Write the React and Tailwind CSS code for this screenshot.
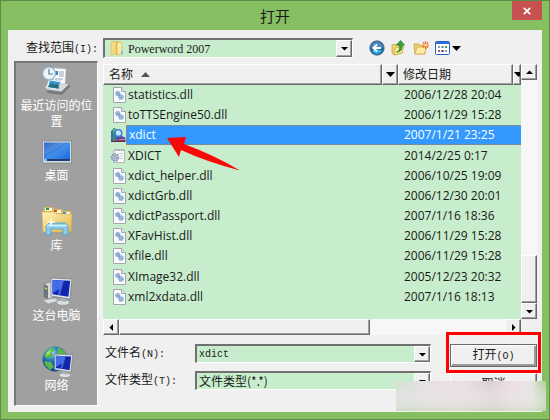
import React from 'react';

const files = [
  { name: 'statistics.dll', date: '2006/12/28 20:04', type: 'dll' },
  { name: 'toTTSEngine50.dll', date: '2006/11/29 15:28', type: 'dll' },
  { name: 'xdict', date: '2007/1/21 23:25', type: 'app', selected: true },
  { name: 'XDICT', date: '2014/2/25 0:17', type: 'ini' },
  { name: 'xdict_helper.dll', date: '2006/10/25 19:09', type: 'dll' },
  { name: 'xdictGrb.dll', date: '2006/12/30 20:01', type: 'dll' },
  { name: 'xdictPassport.dll', date: '2007/1/16 18:36', type: 'dll' },
  { name: 'XFavHist.dll', date: '2006/11/29 15:28', type: 'dll' },
  { name: 'xfile.dll', date: '2006/11/29 15:28', type: 'dll' },
  { name: 'XImage32.dll', date: '2005/12/23 20:32', type: 'dll' },
  { name: 'xml2xdata.dll', date: '2007/1/16 18:13', type: 'dll' },
];

const raised =
  'border border-t-white border-l-white border-r-[#696969] border-b-[#696969] bg-[#f0f0f0] shadow-[inset_-1px_-1px_0_#a0a0a0]';
const sunken =
  'border-t-2 border-l-2 border-r border-b border-t-[#707070] border-l-[#707070] border-r-white border-b-white bg-[#c7edcc]';
const mono = "font-['Liberation_Mono','Noto_Sans_CJK_SC',monospace] text-[10px]";
const serif = "font-['Liberation_Serif','Noto_Sans_CJK_SC',serif] text-[12px] leading-4";

function Arrow({ dir = 'down' }) {
  const d = {
    down: 'M1 3h7L4.5 6.500z',
    up: 'M1 6h7L4.500 2.500z',
    left: 'M6 1v7L2.500 4.500z',
    right: 'M3 1v7L6.500 4.500z',
  }[dir];
  return (
    <svg className="block size-[9px] shrink-0" viewBox="0 0 9 9">
      <path d={d} fill="#000" />
    </svg>
  );
}

function ScrollButton({ dir, label }) {
  return (
    <button type="button" aria-label={label} className={`flex size-4 shrink-0 items-center justify-center ${raised}`}>
      <Arrow dir={dir} />
    </button>
  );
}

function DropMark() {
  return (
    <span className={`pointer-events-none absolute inset-y-0 right-0 flex w-4 items-center justify-center ${raised}`}>
      <Arrow />
    </span>
  );
}

function Gear({ cx, cy, r }) {
  return (
    <g transform={`translate(${cx} ${cy})`}>
      <circle r={r} fill="#dcebf8" stroke="#6f98c4" strokeWidth="1.2" strokeDasharray="1.3 .5" />
      <circle r={r - 0.8} fill="none" stroke="#6f9bcb" strokeWidth=".7" />
      <circle r=".6" fill="#38669b" />
    </g>
  );
}

function FileIcon({ type }) {
  if (type === 'app') {
    return (
      <svg className="-ml-[2px] mr-[2px] block h-4 w-4 shrink-0" viewBox="0 0 16 16">
        <path d="M1 4l3-3 3 1-1 3v8.500H1z" fill="#3f9272" />
        <path d="M1 4l2 .6v9H1z" fill="#3b6f9c" />
        <path d="M3 4.600L6 1.800" stroke="#a6dcc0" strokeWidth=".8" />
        <path d="M5 5h3v8.500H5z" fill="#3f63b5" />
        <path d="M8 10h7l.5 4H8z" fill="#8c2f60" />
        <path d="M1 13.500h14.500V15H1z" fill="#6b2350" />
        <path d="M9 12.700h6" stroke="#e9cbd8" strokeWidth=".7" />
        <path d="M10.500 8.500l4 3.500" stroke="#2f6fd6" strokeWidth="2.200" />
        <circle cx="8.500" cy="6" r="3.300" fill="#bfe6ff" stroke="#3f7fe0" strokeWidth="1.500" />
        <path d="M6.700 5.500a2 2 0 0 1 2-1.500" stroke="#fff" fill="none" />
      </svg>
    );
  }
  if (type === 'ini') {
    return (
      <svg className="-ml-[2px] mr-[2px] block h-4 w-4 shrink-0" viewBox="0 0 16 16">
        <path d="M4 2h10.500v12.500H4z" fill="#fbfbfb" stroke="#b4b4b4" />
        <path d="M5.500 1v2M7.500 1v2M9.500 1v2M11.500 1v2M13.500 1v2" stroke="#999" strokeWidth=".8" />
        <path d="M8.500 5.500H13M10 8h3M10 10.500h3" stroke="#ccc" />
        <circle cx="5" cy="9.500" r="3.400" fill="#c9d7e2" stroke="#8499ab" strokeWidth="1.800" strokeDasharray="1.800 .7" />
        <circle cx="5" cy="9.500" r="1.400" fill="#f4f8fa" stroke="#6c8498" />
      </svg>
    );
  }
  return (
    <svg className="block h-4 w-4 shrink-0" viewBox="0 0 16 16">
      <path d="M1.500.5h8l4 4v11h-12z" fill="#fbfbfd" stroke="#a3a7ab" />
      <path d="M9.500.5v4h4" fill="#e3e6e8" stroke="#a3a7ab" />
      <Gear cx={5.8} cy={6.5} r={2} />
      <Gear cx={9} cy={10} r={2.2} />
    </svg>
  );
}

function RecentIcon() {
  return (
    <svg className="block h-8 w-8" viewBox="0 0 32 32">
      <path d="M3 22l8-5 18 2-7 8-16-2z" fill="#d9dcdd" stroke="#888" strokeWidth=".6" />
      <path d="M6 25l14 2 8-8 1 3-8 8-15-2z" fill="#777b7e" />
      <path d="M13 3l12 1-1 15-12-1z" fill="#fafcff" stroke="#b4bbc0" strokeWidth=".5" />
      <path d="M18 7h5M18 9h5M18 11h5M14 14h8" stroke="#9ba7b1" />
      <path d="M14 6h3v4h-3z" fill="#3485ce" />
      <path d="M8 14l12 2-2 9-13-2z" fill="#eef8ff" stroke="#b1bdc6" strokeWidth=".5" />
      <path d="M9 15.500l10 1.700-1.500 6.500L7 22z" fill="#3992d2" />
      <path d="M7 22l4-4 2 2 3-1 2 4.500z" fill="#256f79" />
      <circle cx="8" cy="8.500" r="6.500" fill="#dce8ef" stroke="#8faab9" />
      <circle cx="8" cy="8.500" r="4.900" fill="#edf6fb" />
      <path d="M8 4v5h4" stroke="#557d96" strokeWidth="1.200" fill="none" />
    </svg>
  );
}

function DesktopIcon() {
  return (
    <svg className="block h-8 w-8" viewBox="0 0 32 32">
      <defs>
        <linearGradient id="desk" x2="1" y2="1">
          <stop stopColor="#1d55c1" />
          <stop offset=".5" stopColor="#438eea" />
          <stop offset="1" stopColor="#1764da" />
        </linearGradient>
      </defs>
      <path d="M1.500 6h29v22h-29z" fill="#d4dbe2" stroke="#77818a" strokeWidth=".7" />
      <path d="M3 7.500h26V26H3z" fill="url(#desk)" />
      <path d="M3 7.500h22L3 20z" fill="#fff" opacity=".12" />
      <path d="M3 24h26v2H3z" fill="#213e70" />
      <path d="M3 24h3v2H3z" fill="#73c2f0" />
    </svg>
  );
}

function LibraryIcon() {
  return (
    <svg className="block h-8 w-8" viewBox="0 0 32 32">
      <defs>
        <linearGradient id="lib" x2="1" y2="1">
          <stop stopColor="#fff3b4" />
          <stop offset="1" stopColor="#dfb64d" />
        </linearGradient>
      </defs>
      <path d="M2 5l2-3h8l1 2h8l1 2h8v18l-2 3H2z" fill="#ddb951" />
      <path d="M4 3h7v3H4zM13 5h7v3h-7zM22 7h7v2h-7z" fill="#fff8df" />
      <path d="M5 3h3v2H5z" fill="#209b45" />
      <path d="M13 5h3v2h-3z" fill="#d24237" />
      <path d="M22 7h3v2h-3z" fill="#358ad8" />
      <path d="M1 7h12l2 2h16l-1 18H2z" fill="url(#lib)" stroke="#d3aa4e" strokeWidth=".5" />
      <path d="M5 21l3-3h16l3 3v9h-5v-6H10v6H5z" fill="#8accea" stroke="#4b9bc2" strokeWidth=".8" />
      <path d="M6 20.500h20" stroke="#d9f7ff" strokeWidth="1.300" />
      <path d="M10 12l1 4 4 1-4 1-1 4-1-4-4-1 4-1z" fill="#fffce5" />
    </svg>
  );
}

function Monitor() {
  return (
    <>
      <ellipse cx="22" cy="27.500" rx="6.500" ry="2.800" fill="#dce0e3" stroke="#858d94" strokeWidth=".6" />
      <path d="M19 20l6 1v6l-6-1z" fill="#a9b3bc" />
      <path d="M10 3l21 1-2 20-19-3z" fill="#e2e7ec" stroke="#6c7681" strokeWidth=".7" />
      <path d="M11.500 5l17.700 .8-1.800 16-15.900-2.500z" fill="#1026ac" />
      <path d="M11.500 5l9 .4-1.500 8-7.500 4.800z" fill="#416be9" />
      <path d="M20 5.400l3 .1-4 14.500-2-.4z" fill="#7aa5ff" opacity=".5" />
    </>
  );
}

function ComputerIcon() {
  return (
    <svg className="block h-8 w-8" viewBox="0 0 32 32">
      <path d="M3 9l6-2 4 2v13l-6 2-4-2z" fill="#d4d8da" stroke="#747c83" strokeWidth=".6" />
      <path d="M3 9l4 2v13l-4-2z" fill="#6d747a" />
      <path d="M4 13l2 1" stroke="#a4f34d" strokeWidth="1.500" />
      <path d="M2 25l12-2 4 3-11 3z" fill="#d9dcde" stroke="#8b9298" strokeWidth=".6" />
      <Monitor />
    </svg>
  );
}

function NetworkIcon() {
  return (
    <svg className="block h-8 w-8" viewBox="0 0 32 32">
      <defs>
        <radialGradient id="globe" cx=".35" cy=".25">
          <stop stopColor="#caf2ff" />
          <stop offset=".45" stopColor="#378bd4" />
          <stop offset="1" stopColor="#104a94" />
        </radialGradient>
      </defs>
      <circle cx="14" cy="14" r="12.500" fill="url(#globe)" />
      <path d="M5 6l7-4 2 3-3 2 1 4-5 3-4-3zM17 2l7 4 2 6-6 2-4-4zM3 16l7 1 3 5-4 3-5-5z" fill="#56b64e" />
      <path d="M6 7l5-3-2 5-4 2z" fill="#9ddd6d" />
      <g transform="translate(5 6.500) scale(.86)">
        <Monitor />
      </g>
    </svg>
  );
}

const places = [
  { label: '最近访问的位置', Icon: RecentIcon },
  { label: '桌面', Icon: DesktopIcon },
  { label: '库', Icon: LibraryIcon },
  { label: '这台电脑', Icon: ComputerIcon },
  { label: '网络', Icon: NetworkIcon },
];

function Toolbar() {
  return (
    <div className="flex w-[189px] shrink-0 items-center pl-4">
      <button type="button" aria-label="后退" className="w-[21px]">
        <svg className="block size-4" viewBox="0 0 16 16">
          <circle cx="8" cy="8" r="7.300" fill="#1e659d" stroke="#687b8d" strokeWidth=".7" />
          <path d="M2 8a6 6 0 0 1 12 0c-4-2-8 2-12 0z" fill="#528dbe" />
          <path d="M3 11c3-2 7-2 10 0a6 6 0 0 1-10 0z" fill="#2bb9e4" />
          <path d="M12 8H5M8 4.500L4.500 8 8 11.500" fill="none" stroke="#fff" strokeWidth="2" />
        </svg>
      </button>
      <button type="button" aria-label="向上一级" className="w-[23px]">
        <svg className="block size-4" viewBox="0 0 16 16">
          <path d="M2 5l4-1 1 2 5-1v8l-8 2-2-2z" fill="#f1d66a" stroke="#ba9937" strokeWidth=".7" />
          <path d="M5 8l9-2-2 7-8 2z" fill="#ffec9b" stroke="#c5a13e" strokeWidth=".7" />
          <path d="M6.500 12c3-1 3.500-3 3-7H6.500l4-4.500 4 4.500H12c.5 5-1.500 7-5.500 7z" fill="#35a735" stroke="#217628" strokeWidth=".7" />
        </svg>
      </button>
      <button type="button" aria-label="新建文件夹" className="w-[22px]">
        <svg className="block size-4" viewBox="0 0 16 16">
          <path d="M1 4h5l1 2h5v8H2z" fill="#edcf61" stroke="#be9a40" strokeWidth=".7" />
          <path d="M4 7h10l-3 7H2z" fill="#ffeaa0" stroke="#cba747" strokeWidth=".7" />
          <path d="M12.500 1v8M8.500 5h8M9.800 2.200l5.500 5.500M15.200 2.200L9.800 7.700" stroke="#ee662d" strokeWidth="1.100" />
          <circle cx="12.500" cy="5" r="1.500" fill="#ffe574" />
        </svg>
      </button>
      <button type="button" aria-label="查看方式" className="flex items-center gap-[2px]">
        <svg className="block h-[14px] w-[15px]" viewBox="0 0 15 14">
          <rect x=".5" y=".5" width="14" height="13" rx="1" fill="#fff" stroke="#235fc5" />
          <path d="M1 1h13v2H1z" fill="#2e70dc" />
          <path d="M3 5h2v2H3zM10 9h2v2h-2z" fill="#8b9bac" />
          <path d="M6.500 5h2v2h-2z" fill="#5c7ad3" />
          <path d="M10 5h2v2h-2z" fill="#499d55" />
          <path d="M3 9h2v2H3z" fill="#d4503a" />
          <path d="M6.500 9h2v2h-2z" fill="#302e95" />
        </svg>
        <HeadArrow />
      </button>
    </div>
  );
}

function HeadArrow() {
  return (
    <svg className="mx-auto block h-[5px] w-[9px]" viewBox="0 0 9 5">
      <path d="M0 0h9L4.500 5z" />
    </svg>
  );
}

function FileTable() {
  const th = `h-[21px] p-0 text-left font-normal ${raised}`;
  return (
    <div className="min-w-0 flex-1 overflow-hidden bg-[#c7edcc]">
      <table className="h-[243px] w-full table-fixed border-separate border-spacing-0 font-['Open_Sans','Noto_Sans_CJK_SC',sans-serif] text-[12px] leading-4 text-[#1a1a1a]">
        <colgroup>
          <col />
          <col className="w-4" />
          <col className="w-[115px]" />
          <col className="w-2" />
        </colgroup>
        <thead>
          <tr className="h-[21px]">
            <th scope="col" className={th}>
              <span className="flex items-center gap-2 pl-[5px]">
                名称
                <svg className="block h-[5px] w-[9px]" viewBox="0 0 9 5">
                  <path d="M0 5h9L4.500 0z" fill="#555" />
                </svg>
              </span>
            </th>
            <td className={th}><HeadArrow /></td>
            <th scope="col" className={th}>
              <span className="block pl-1">修改日期</span>
            </th>
            <td className={`overflow-hidden ${th}`}><HeadArrow /></td>
          </tr>
        </thead>
        <tbody>
          {files.map((f) => {
            const bg = f.selected
              ? 'border-y border-dotted border-[#c07a3c] bg-[#3399ff] text-white'
              : '';
            return (
              <tr key={f.name} aria-selected={!!f.selected}>
                <td colSpan={2} className="p-0">
                  <div className="flex h-5 items-center pl-[9px]">
                    <FileIcon type={f.type} />
                    <span
                      className={`-ml-[2px] flex h-5 flex-1 items-center pl-[2px] ${bg} ${f.selected ? 'border-l' : ''}`}
                    >
                      {f.name}
                    </span>
                  </div>
                </td>
                <td colSpan={2} className="p-0">
                  <div className={`flex h-5 items-center pl-[6px] whitespace-nowrap ${bg}`}>{f.date}</div>
                </td>
              </tr>
            );
          })}
        </tbody>
      </table>
    </div>
  );
}

export default function App() {
  return (
    <main className="relative flex min-h-screen flex-col border border-[#5f8a45] bg-[#86bf61] px-[7px] pb-[7px] font-['Noto_Sans_CJK_SC',sans-serif] text-[12px] leading-4 text-[#1a1a1a]">
      <header className="relative flex h-[29px] items-center justify-center">
        <h1 className="text-[15px] leading-5">打开</h1>
        <button
          type="button"
          aria-label="关闭"
          className="absolute top-0 right-0 flex h-[19px] w-[30px] items-center justify-center bg-[#c75050]"
        >
          <svg className="block size-2" viewBox="0 0 8 8">
            <path d="M.8.8l6.400 6.400M7.200.8L.8 7.200" stroke="#fff" strokeWidth="1.700" />
          </svg>
        </button>
      </header>

      <form className="flex flex-1 flex-col bg-[#f0f0f0]" onSubmit={(e) => e.preventDefault()}>
        <div className="flex h-[31px] items-center pt-[5px]">
          <label htmlFor="folder" className="w-[95px] shrink-0 pl-[18px]">
            查找范围<span className={mono}>(I):</span>
          </label>
          <div className={`relative h-5 flex-1 ${sunken}`}>
            <svg className="pointer-events-none absolute top-0 left-1 size-4" viewBox="0 0 16 16">
              <path d="M2 2l5-1v13l-5 1z" fill="#f5dc83" stroke="#d9b655" strokeWidth=".6" />
              <path d="M7 1l5 1v12l-5 1z" fill="#e5bb50" />
              <path d="M8 3l3-1 2 1v11l-5 1z" fill="#fbe9a3" stroke="#d6b150" strokeWidth=".6" />
              <path d="M12 11h2v3h-2z" fill="#8ab7c8" />
            </svg>
            <select id="folder" className={`block h-full w-full appearance-none bg-transparent pl-[23px] ${serif}`}>
              <option>Powerword 2007</option>
            </select>
            <DropMark />
          </div>
          <Toolbar />
        </div>

        <div className="flex flex-1 gap-[5px] px-[5px] pb-[6px] pl-[6px]">
          <nav className="w-[84px] shrink-0 border-t-2 border-r border-b border-l-2 border-t-[#777] border-r-white border-b-white border-l-[#777] bg-[#a0a0a0] pt-[2px]">
            {places.map(({ label, Icon }) => (
              <button
                type="button"
                key={label}
                className="flex h-[70px] w-full flex-col items-center px-1 leading-4 text-white last:h-[52px]"
              >
                <Icon />
                <span>{label}</span>
              </button>
            ))}
          </nav>

          <div className="flex min-w-0 flex-1 flex-col pt-[3px]">
            <div className="flex h-[255px]">
              <FileTable />
              <div className="flex w-4 shrink-0 flex-col bg-[#f7f7f7]">
                <ScrollButton dir="up" label="向上滚动" />
                <div className="flex-1" />
                <div className={`h-12 ${raised}`} />
                <ScrollButton dir="down" label="向下滚动" />
              </div>
            </div>
            <div className="flex h-4 pr-4">
              <ScrollButton dir="left" label="向左滚动" />
              <div className="flex min-w-0 flex-1 bg-[#f7f7f7]">
                <div className={`w-[65%] ${raised}`} />
              </div>
              <ScrollButton dir="right" label="向右滚动" />
            </div>

            <div className="mt-[9px] flex">
              <div className="flex flex-1 flex-col gap-2">
                <div className="flex items-center">
                  <label htmlFor="file-name" className="w-[92px] shrink-0 pl-[2px]">
                    文件名<span className={mono}>(N):</span>
                  </label>
                  <div className={`relative h-[19px] flex-1 ${sunken}`}>
                    <input
                      id="file-name"
                      defaultValue="xdict"
                      className={`block h-full w-full bg-transparent pr-4 pl-[2px] ${mono}`}
                    />
                    <DropMark />
                  </div>
                </div>
                <div className="flex items-center">
                  <label htmlFor="file-type" className="w-[92px] shrink-0 pl-[2px]">
                    文件类型<span className={mono}>(T):</span>
                  </label>
                  <div className={`relative h-[19px] flex-1 ${sunken}`}>
                    <select
                      id="file-type"
                      className="block h-full w-full appearance-none bg-transparent pl-[2px] font-['Noto_Sans_CJK_SC',sans-serif] text-[12px] leading-4"
                    >
                      <option>文件类型(*.*)</option>
                    </select>
                    <DropMark />
                  </div>
                </div>
              </div>
              <div className="ml-[19px] flex w-[87px] shrink-0 flex-col gap-[6px]">
                <div className="relative">
                  <button
                    type="submit"
                    className="h-[23px] w-full border border-[#696969] bg-[#f0f0f0] shadow-[inset_1px_1px_0_#fff,inset_-2px_-2px_0_#999]"
                  >
                    打开<span className={mono}>(O)</span>
                  </button>
                  <div className="pointer-events-none absolute -inset-x-1 -top-3 -bottom-[6px] border-[3px] border-[#ff0000]" />
                </div>
                <button type="button" className={`h-[19px] w-full leading-4 ${raised}`}>
                  取消
                </button>
              </div>
            </div>
          </div>
        </div>
      </form>

      <svg
        className="pointer-events-none absolute top-[134px] left-[166px] h-[37px] w-[74px]"
        viewBox="0 0 74 37"
      >
        <path d="M0 3L19 2 17 9Q47 20 73 35.500 40 27 14 15L12 22z" fill="#fa0808" />
      </svg>
      <div className="pointer-events-none absolute right-[3px] bottom-2 h-[30px] w-[150px] bg-[linear-gradient(90deg,#d2e2d2_0%,#e6e0e2_20%,#ecdfe1_45%,#dccfd2_63%,#eedfe0_78%,#e6e6e2_90%,#a9cf90_100%)]">
        <div className="h-full w-full bg-[linear-gradient(180deg,transparent_0%,#e9e4e9_50%,#dfe2d8_85%,#c9d8bc_100%)] opacity-60" />
      </div>
    </main>
  );
}
